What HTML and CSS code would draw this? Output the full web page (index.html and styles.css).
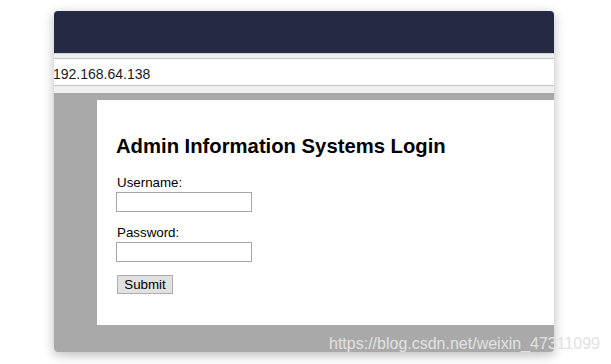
FILE: index.html
```html
<!DOCTYPE html>
<html>
<head>
<meta charset="utf-8">
<title>Admin Login</title>
<link rel="stylesheet" href="styles.css">
</head>
<body>
<div class="window">
  <div class="titlebar"></div>
  <div class="toolbar">
    <div class="address">192.168.64.138</div>
  </div>
  <div class="viewport">
    <div class="panel">
      <h1 class="title">Admin Information Systems Login</h1>
      <form class="form">
        <div class="field field-user">
          <label class="label">Username:</label>
          <input class="input" type="text">
        </div>
        <div class="field field-pass">
          <label class="label">Password:</label>
          <input class="input" type="password">
        </div>
        <button class="submit" type="button">Submit</button>
      </form>
    </div>
  </div>
</div>
<div class="watermark">https://blog.csdn.net/weixin_47311099</div>
</body>
</html>
```
FILE: styles.css
```css
html, body {
  margin: 0;
  padding: 0;
  background: #ffffff;
}
body {
  width: 611px;
  height: 364px;
  overflow: hidden;
  position: relative;
  padding-top: 11px;
  padding-left: 54px;
  box-sizing: border-box;
}
.window {
  width: 500px;
  height: 341px;
  border-radius: 4px;
  overflow: hidden;
  box-shadow: 0 3px 12px rgba(0, 0, 0, 0.28);
  display: flex;
  flex-direction: column;
}
.titlebar {
  height: 42px;
  background: #252943;
  flex: none;
}
.toolbar {
  flex: none;
  background: #efefef;
  border-top: 1px solid #cfcfcf;
  padding: 4px 0 7px 0;
}
.address {
  height: 24px;
  padding-top: 2px;
  background: #ffffff;
  border-top: 1px solid #c4c4c4;
  border-bottom: 1px solid #c4c4c4;
  box-sizing: content-box;
  font-family: "Liberation Sans", Arial, sans-serif;
  font-size: 14px;
  line-height: 27px;
  color: #1a1a1a;
  text-indent: -1px;
  white-space: nowrap;
  overflow: hidden;
}
.viewport {
  flex: 1;
  background: #a9a9a9;
  padding: 7px 0 0 43px;
}
.panel {
  height: 225px;
  background: #ffffff;
  padding: 35px 0 0 19px;
  box-sizing: border-box;
  font-family: "Liberation Sans", Arial, sans-serif;
  color: #000000;
}
.title {
  margin: 0;
  font-size: 20.25px;
  line-height: 23px;
  font-weight: bold;
}
.form {
  margin: 0 0 0 1px;
  display: flex;
  flex-direction: column;
  align-items: flex-start;
}
.field {
  display: flex;
  flex-direction: column;
  align-items: flex-start;
}
.field-user {
  margin-top: 17px;
}
.field-pass {
  margin-top: 13px;
}
.label {
  font-size: 13.33px;
  line-height: 15px;
  margin-bottom: 2px;
}
.input {
  width: 136px;
  height: 20px;
  box-sizing: border-box;
  margin: 0 0 0 -1px;
  border: 1px solid #a6a6a6;
  padding: 0;
  background: #ffffff;
}
.submit {
  margin-top: 13px;
  width: 56px;
  height: 19px;
  padding: 0;
  box-sizing: border-box;
  border: 1px solid #adadad;
  background: #e1e1e1;
  font-family: "Liberation Sans", Arial, sans-serif;
  font-size: 13.33px;
  line-height: 16px;
  color: #000000;
}
.watermark {
  position: absolute;
  left: 329px;
  top: 336px;
  font-family: "Liberation Sans", Arial, sans-serif;
  font-size: 16px;
  line-height: 16px;
  color: #e2e2e2;
  white-space: nowrap;
}
```
